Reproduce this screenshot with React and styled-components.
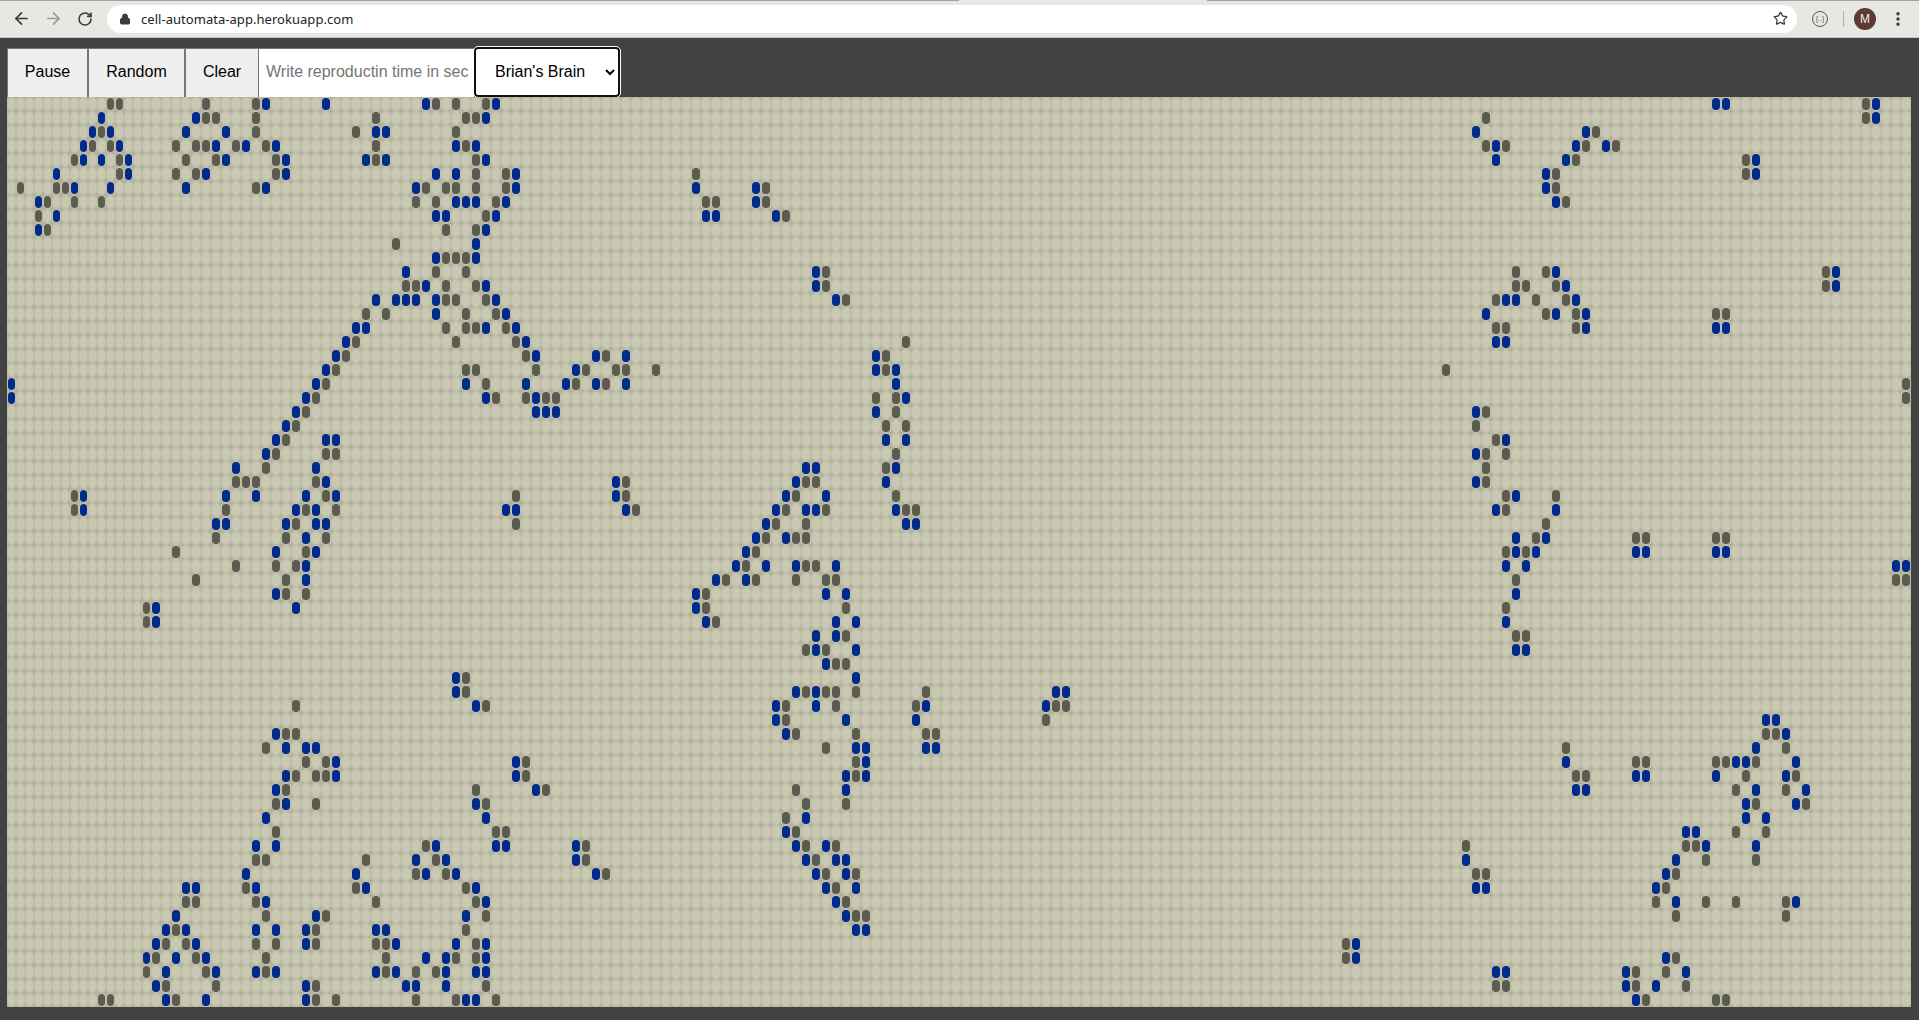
import React from 'react';
import styled, { createGlobalStyle } from 'styled-components';
import { ArrowLeft, ArrowRight, RotateCw, Lock, Star, MoreVertical } from 'lucide-react';

const Global = createGlobalStyle`
  html, body { margin: 0; padding: 0; height: 100%; background: #424242; overflow: hidden; }
  body { font-family: "Liberation Sans", Arial, sans-serif; }
`;

const Page = styled.div`
  width: 1919px;
  height: 1020px;
  display: flex;
  flex-direction: column;
  background: #424242;
`;

const Chrome = styled.header`
  position: relative;
  height: 38px;
  flex: none;
  box-sizing: border-box;
  display: flex;
  align-items: center;
  padding: 0 0 0 11px;
  background: #e7e7e4;
  border-bottom: 1px solid #c4c4c0;
`;

const TopEdge = styled.div`
  position: absolute;
  top: 0;
  left: 0;
  right: 0;
  height: 1px;
  background: linear-gradient(to right, #a3a39f 959px, transparent 959px, transparent 1207px, #a3a39f 1207px);
`;

const Nav = styled.div`
  display: flex;
  align-items: center;
  gap: 12px;
  width: 96px;
  flex: none;
`;

const NavIcon = styled.span`
  display: flex;
  width: 20px;
  height: 20px;
  align-items: center;
  justify-content: center;
  color: ${p => (p.$off ? '#9a9a98' : '#3a3b3d')};
`;

const Omnibox = styled.div`
  width: 1690px;
  height: 28px;
  flex: none;
  box-sizing: border-box;
  display: flex;
  align-items: center;
  background: #fff;
  border-radius: 14px;
  padding: 0 9px 0 12px;
  font-size: 13px;
  color: #202124;
  font-family: "Noto Sans", "Liberation Sans", sans-serif;
  letter-spacing: 0.04px;
`;

const Url = styled.span`
  margin-left: 10px;
  flex: 1;
`;

const ExtIcon = styled.span`
  position: relative;
  width: 16px;
  height: 16px;
  margin-left: 15px;
  box-sizing: border-box;
  border: 1.5px solid #55565a;
  border-radius: 50%;
  flex: none;
  display: flex;
  align-items: center;
  justify-content: center;
  font-size: 7px;
  line-height: 1;
  color: #55565a;
`;

const Divider = styled.span`
  width: 1px;
  height: 16px;
  background: #b0b0ae;
  margin-left: 15px;
  flex: none;
`;

const Avatar = styled.span`
  width: 22px;
  height: 22px;
  margin-left: 10px;
  border-radius: 50%;
  background: #5b3a32;
  color: #f5eeea;
  flex: none;
  display: flex;
  align-items: center;
  justify-content: center;
  font-size: 12px;
`;

const Dots = styled.span`
  display: flex;
  margin-left: 13px;
  color: #3a3b3d;
`;

const Toolbar = styled.div`
  display: flex;
  align-items: stretch;
  height: 50px;
  margin: 9px 0 0 7px;
  flex: none;
`;

const ToolButton = styled.button`
  box-sizing: border-box;
  height: 49px;
  margin-top: 1px;
  padding: 0 ${p => p.$pad}px 2px;
  width: ${p => p.$w}px;
  font: 16px "Liberation Sans", Arial, sans-serif;
  color: #000;
  background: #efefef;
  border: 1px solid #767676;
  border-width: 1px 1px 0 0;
  border-left: 1px solid #767676;
  border-radius: 0;
`;

const TimeInput = styled.input`
  box-sizing: border-box;
  width: 215px;
  height: 49px;
  margin-top: 1px;
  padding: 0 6px 2px 7px;
  font: 16px "Liberation Sans", Arial, sans-serif;
  background: #fff;
  border: 0;
  border-top: 1px solid #767676;
  border-radius: 0;
  outline: none;
  &::placeholder { color: #757575; opacity: 1; }
`;

const ModeSelect = styled.select`
  box-sizing: border-box;
  width: 146px;
  height: 50px;
  padding: 0 0 2px 15px;
  font: 16px "Liberation Sans", Arial, sans-serif;
  color: #000;
  background: #fff;
  border: 2px solid #101010;
  border-radius: 4px;
  outline: 1px solid #fff;
`;

const Board = styled.div`
  display: grid;
  grid-template-columns: repeat(16, 9px) repeat(176, 10px);
  grid-auto-rows: 14px;
  width: 1904px;
  margin-left: 7px;
  background: #b3b39d;
  flex: none;
`;

const Cell = styled.div`
  box-sizing: border-box;
  border: 1px solid #c0c0aa;
  border-radius: 4px;
  background-clip: padding-box;
  background-color: ${p => (p.$state === 'b' ? '#002a8c' : p.$state === 'g' ? '#5b5b50' : '#c9c9b3')};
`;

const ROWS = [
  ['27 33 43 50 172 173 188', '11 12 21 26 44 46 49 187'],
  ['10 20 49 188', '21 22 26 38 47 48 149 187'],
  ['9 11 19 23 38 39 148 159', '10 26 36 46 160'],
  ['8 12 22 25 28 46 48 150 158 161', '9 11 18 20 21 24 27 38 47 149 151 159 162'],
  ['8 10 13 23 29 37 39 49 150 157 176', '7 12 19 22 28 38 48 158 175'],
  ['5 13 21 29 44 46 52 155 176', '12 18 20 28 48 51 70 156 175'],
  ['7 11 19 27 42 52 70 76 155', '1 5 6 26 43 45 46 48 51 77 156'],
  ['3 46 47 48 51 76 156', '4 7 10 42 44 50 71 72 77 157'],
  ['5 44 45 50 71 72 78', '3 49 79'],
  ['3 49', '4 45 48'],
  ['48', '40'],
  ['44 48', '45 46 47'],
  ['41 82 156 184', '44 47 83 152 155 183'],
  ['43 49 82 157 184', '41 42 45 48 83 152 153 156 183'],
  ['38 40 41 42 44 50 84 151 152 158', '45 46 49 85 150 154 157'],
  ['44 51 149 156 159', '37 39 47 50 155 158 172 173'],
  ['36 37 49 52 159 172 173', '45 47 48 51 150 151 158'],
  ['35 53 150 151', '36 46 52 91'],
  ['34 54 60 63 88', '35 53 61 89'],
  ['33 58 88 90', '34 47 48 54 59 62 63 66 89 145'],
  ['0 32 47 53 57 60 63 90', '33 49 58 61 191'],
  ['0 31 49 54 91', '32 50 53 55 56 88 90 191'],
  ['30 54 55 56 88 148', '31 90 149'],
  ['29', '30 89 91 148'],
  ['28 33 34 89 91 151', '29 150'],
  ['27 148', '28 33 34 90 149 151'],
  ['24 32 81 82 90', '27 89 149'],
  ['33 62 80 89 148', '24 25 26 32 63 81 82 149'],
  ['8 23 26 31 34 62 79 83 152', '7 33 52 63 80 90 151 156'],
  ['8 30 32 51 52 63 78 81 82 90 150 156', '7 23 31 34 64 79 83 91 92 151'],
  ['22 23 29 32 33 77 91 92', '30 52 78 81 155'],
  ['31 76 79 152 155', '22 29 33 77 80 81 154 164 165 172 173'],
  ['28 32 75 152 154 164 165 172 173', '18 31 76 151 153'],
  ['31 74 77 80 84 151 153 190 191', '24 28 30 75 81 82'],
  ['31 72 75', '20 29 73 76 80 83 84 152 190 191'],
  ['28 70 83 85 152', '29 31 71'],
  ['16 30 70', '15 71 85 151'],
  ['16 71 84 86 151', '15 72'],
  ['82 84', '85 152 153'],
  ['82 86 152 153', '81 83'],
  ['83', '84 85'],
  ['46 86', '47'],
  ['46 80 82 106 107', '47 81 83 84 86 93'],
  ['48 78 82 93 105', '30 49 79 84 92 106 107'],
  ['78 85 92 177 178', '79 105'],
  ['28 79 179', '29 30 80 86 93 94 177 178'],
  ['29 31 32 86 87 93 94 176', '27 83 157 179'],
  ['34 52 87 157 174 175 180', '31 33 53 86 164 165 172 173 176'],
  ['29 34 52 85 87 164 165 172 179', '30 32 33 53 86 158 159 175 180'],
  ['28 54 85 158 159 176 181', '29 48 55 80 174 179'],
  ['29 48 175 180', '28 32 49 81 85 176 181'],
  ['27 49 81 175 177', '79'],
  ['79 169 170', '28 50 51 80 174 177'],
  ['26 28 44 50 51 58 80 83 171 176', '43 59 81 84 147 169 170'],
  ['42 45 58 81 84 85 147 168', '26 27 37 44 59 82 171 176'],
  ['25 36 43 46 60 82 85 167', '42 45 61 83 86 148 149 168'],
  ['19 20 26 37 48 83 86 148 149 166', '25 36 47 84 167'],
  ['27 49 84 168 180', '19 20 26 38 48 85 166 171 174 179'],
  ['18 32 47 85', '27 33 49 86 87 168 179'],
  ['17 19 26 28 31 38 39 86 87', '18 32 47'],
  ['16 20 31 40 46 49 136', '17 19 26 28 32 38 39 48 135'],
  ['15 18 21 43 45 49 136 167', '16 20 27 39 46 48 135 168'],
  ['17 22 26 28 38 40 45 48 49 150 151 163 169', '15 21 27 39 42 44 164 167'],
  ['16 31 41 42 45 163 166', '17 22 32 49 150 151 164 169'],
  ['17 21 31 47 48 164', '10 11 18 32 34 42 46 50 165 172 173'],
];

const parse = s => (s ? s.split(' ').map(Number) : []);
const CELLS = ROWS.flatMap(([blue, gray]) => {
  const row = new Array(192).fill('');
  parse(gray).forEach(c => { row[c] = 'g'; });
  parse(blue).forEach(c => { row[c] = 'b'; });
  return row;
});

export default function App() {
  return (
    <Page>
      <Global />
      <Chrome>
        <TopEdge />
        <Nav>
          <NavIcon><ArrowLeft size={19} strokeWidth={2.2} /></NavIcon>
          <NavIcon $off><ArrowRight size={19} strokeWidth={2.2} /></NavIcon>
          <NavIcon><RotateCw size={16} strokeWidth={2.4} /></NavIcon>
        </Nav>
        <Omnibox>
          <Lock size={12} fill="#3a3b3d" color="#3a3b3d" strokeWidth={2} />
          <Url>cell-automata-app.herokuapp.com</Url>
          <Star size={15} color="#3a3b3d" strokeWidth={2} />
        </Omnibox>
        <ExtIcon>{'{..}'}</ExtIcon>
        <Divider />
        <Avatar>M</Avatar>
        <Dots><MoreVertical size={18} strokeWidth={2.6} /></Dots>
      </Chrome>
      <Toolbar>
        <ToolButton $w={81} $pad={10}>Pause</ToolButton>
        <ToolButton $w={97} $pad={10}>Random</ToolButton>
        <ToolButton $w={74} $pad={10}>Clear</ToolButton>
        <TimeInput placeholder="Write reproductin time in sec" />
        <ModeSelect defaultValue="brain">
          <option value="brain">Brian's Brain</option>
          <option value="life">Game of Life</option>
        </ModeSelect>
      </Toolbar>
      <Board>
        {CELLS.map((state, i) => <Cell key={i} $state={state} />)}
      </Board>
    </Page>
  );
}
